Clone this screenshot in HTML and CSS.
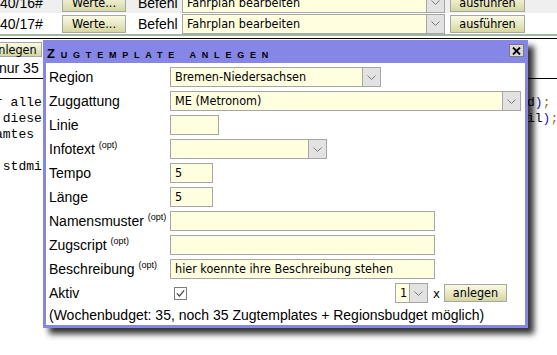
FILE: index.html
```html
<!DOCTYPE html>
<html lang="de">
<head>
    <meta charset="UTF-8">
    <meta name="viewport" content="width=device-width, initial-scale=1.0">
    <title>Zugtemplate anlegen</title>
    <link rel="stylesheet" href="styles.css">
</head>
<body>

    <div class="page">
        <div class="befehl grau">
            <span>40/16#</span>
            <button class="btn werte">Werte...</button>
            <span>Befehl</span>
            <div class="sel befehl-sel">
                <span class="val">Fahrplan bearbeiten</span>
                <span class="pfeil"><svg width="9" height="5" viewBox="0 0 9 5"><path d="M0.5 0.5 L4.5 4.5 L8.5 0.5" fill="none" stroke="#7a7a7a"/></svg></span>
            </div>
            <button class="btn ausf">ausführen</button>
        </div>
        <div class="befehl">
            <span>40/17#</span>
            <button class="btn werte">Werte...</button>
            <span>Befehl</span>
            <div class="sel befehl-sel">
                <span class="val">Fahrplan bearbeiten</span>
                <span class="pfeil"><svg width="9" height="5" viewBox="0 0 9 5"><path d="M0.5 0.5 L4.5 4.5 L8.5 0.5" fill="none" stroke="#7a7a7a"/></svg></span>
            </div>
            <button class="btn ausf">ausführen</button>
        </div>
        <div class="trenner"></div>

        <div class="neu">
            <button class="btn neu-btn">anlegen</button>
        </div>
        <div class="quota">nur 35</div>

        <div class="code">
<pre>r alle
 diese
amtes

 stdmi</pre>
<pre>d<span class="k">)</span><span class="s">;</span>
il<span class="k">)</span><span class="s">;</span></pre>
        </div>
    </div>

    <!-- Dialog liegt über der Seite -->
    <div class="dialog">
        <div class="dlg-titel">
            <span class="titel-text">Zugtemplate anlegen</span>
            <span class="schliessen">
                <svg width="9" height="8" viewBox="0 0 9 8"><path d="M1 0.5 L8 7.5 M8 0.5 L1 7.5" stroke="#000" stroke-width="1.8"/></svg>
            </span>
        </div>
        <div class="formular">
            <label>Region</label>
            <div class="sel w-region">
                <span class="val">Bremen-Niedersachsen</span>
                <span class="pfeil"><svg width="9" height="5" viewBox="0 0 9 5"><path d="M0.5 0.5 L4.5 4.5 L8.5 0.5" fill="none" stroke="#7a7a7a"/></svg></span>
            </div>

            <label>Zuggattung</label>
            <div class="sel w-gattung">
                <span class="val">ME (Metronom)</span>
                <span class="pfeil"><svg width="9" height="5" viewBox="0 0 9 5"><path d="M0.5 0.5 L4.5 4.5 L8.5 0.5" fill="none" stroke="#7a7a7a"/></svg></span>
            </div>

            <label>Linie</label>
            <div class="feld w-linie"></div>

            <label>Infotext <sup>(opt)</sup></label>
            <div class="sel w-info">
                <span class="val"></span>
                <span class="pfeil"><svg width="9" height="5" viewBox="0 0 9 5"><path d="M0.5 0.5 L4.5 4.5 L8.5 0.5" fill="none" stroke="#7a7a7a"/></svg></span>
            </div>

            <label>Tempo</label>
            <div class="feld w-zahl">5</div>

            <label>Länge</label>
            <div class="feld w-zahl">5</div>

            <label>Namensmuster <sup>(opt)</sup></label>
            <div class="feld w-lang"></div>

            <label>Zugscript <sup>(opt)</sup></label>
            <div class="feld w-lang"></div>

            <label>Beschreibung <sup>(opt)</sup></label>
            <div class="feld w-lang">hier koennte ihre Beschreibung stehen</div>

            <label>Aktiv</label>
            <div class="aktiv-zeile">
                <span class="haken">
                    <svg width="13" height="13" viewBox="0 0 13 13"><rect x="0.5" y="0.5" width="12" height="12" fill="#fff" stroke="#7c7c7c"/><path d="M2.8 6.3 L5.4 9 L10.2 3.4" fill="none" stroke="#444" stroke-width="1.2"/></svg>
                </span>
                <div class="sel w-anzahl">
                    <span class="val">1</span>
                    <span class="pfeil"><svg width="9" height="5" viewBox="0 0 9 5"><path d="M0.5 0.5 L4.5 4.5 L8.5 0.5" fill="none" stroke="#7a7a7a"/></svg></span>
                </div>
                <span class="mal">x</span>
                <button class="btn anlegen">anlegen</button>
            </div>
        </div>
        <div class="budget">(Wochenbudget: 35, noch 35 Zugtemplates + Regionsbudget möglich)</div>
    </div>

</body>
</html>
```

FILE: styles.css
```css
body {
    margin: 0;
    background-color: #fff;
    font-family: "Liberation Sans", Arial, sans-serif;
    font-size: 14px;
    color: #000;
    overflow: hidden;
}
.page {
    margin-top: -8px;
}

/* Befehlszeilen oben */
.befehl {
    display: grid;
    grid-template-columns: 62px 76px 44px 268px 75px;
    align-items: center;
    height: 21px;
    white-space: nowrap;
}
.befehl.grau {
    background-color: #efefef;
}
.trenner {
    height: 2px;
    background-color: #9fb89f;
    margin-bottom: 2px;
}
.neu {
    border-top: 1px solid #000;
    height: 20px;
    display: flex;
    align-items: center;
}
.quota {
    height: 19px;
    line-height: 19px;
    border-bottom: 1px solid #000;
    margin-left: -1px;
    white-space: nowrap;
}
.code {
    display: grid;
    grid-template-columns: 532px auto;
    margin: 16px 0 0 -5px;
    font: 13px/16px "Liberation Mono", "Courier New", monospace;
}
.code pre {
    margin: 0;
    font: inherit;
}
.code .k { color: #1a1aa6; }
.code .s { color: #a86a00; }

/* Formularelemente */
.btn {
    font-family: "DejaVu Sans Condensed", "DejaVu Sans", sans-serif;
    font-size: 12.5px;
    height: 18px;
    padding: 0;
    border: 1px solid #a6a6a6;
    background: linear-gradient(#fafae4, #d6d6a2);
    color: #000;
    line-height: 16px;
    box-sizing: border-box;
}
.werte { width: 64px; }
.ausf { width: 75px; }
.neu-btn {
    width: 56px;
    height: 15px;
    margin-left: -14px;
    line-height: 13px;
}
.sel,
.feld {
    display: flex;
    height: 20px;
    box-sizing: border-box;
    border: 1px solid #a6a6a6;
    background-color: #ffffe0;
    font-family: "DejaVu Sans Condensed", "DejaVu Sans", sans-serif;
    font-size: 12.5px;
    line-height: 18px;
    white-space: nowrap;
}
.sel .val {
    flex: 1;
    padding-left: 4px;
    overflow: hidden;
}
.feld {
    padding-left: 4px;
}
.sel .pfeil {
    width: 17px;
    background-color: #e2e2e2;
    border-left: 1px solid #a6a6a6;
    display: flex;
    align-items: center;
    justify-content: center;
}
.befehl-sel { width: 263px; }

/* Dialog */
.dialog {
    position: absolute;
    left: 43px;
    top: 40px;
    width: 479px;
    height: 282px;
    border: 3px solid #8686e6;
    background-color: #fff;
    box-shadow: 6px 6px 6px rgba(0, 0, 0, 0.8);
}
.dlg-titel {
    height: 20px;
    background-color: #8686e6;
    display: flex;
    justify-content: space-between;
    align-items: flex-start;
}
.titel-text {
    font-weight: bold;
    font-size: 13px;
    font-variant: small-caps;
    letter-spacing: 5.8px;
    line-height: 21px;
    margin-left: 1px;
}
.schliessen {
    width: 15px;
    height: 13px;
    margin: 1px 1px 0 0;
    box-sizing: border-box;
    border: 1px solid #7a7a7a;
    background-color: #d8d8d8;
    display: flex;
    align-items: center;
    justify-content: center;
}
.formular {
    display: grid;
    grid-template-columns: 121px 1fr;
    grid-auto-rows: 24px;
    align-items: center;
    padding: 2px 0 0 3px;
}
.formular label {
    white-space: nowrap;
}
sup {
    font-size: 9px;
    line-height: 0;
}
.w-region { width: 211px; }
.w-gattung { width: 351px; }
.w-linie { width: 49px; }
.w-info { width: 157px; }
.w-zahl { width: 43px; }
.w-lang { width: 265px; }
.w-anzahl { width: 33px; }
.aktiv-zeile {
    display: flex;
    align-items: center;
    padding-right: 18px;
}
.haken {
    display: flex;
    margin: 1px auto 0 4px;
}
.mal {
    font-family: "DejaVu Sans Condensed", "DejaVu Sans", sans-serif;
    font-size: 13px;
    margin: 0 4px 0 5px;
}
.anlegen {
    width: 63px;
}
.budget {
    padding-left: 3px;
    line-height: 20px;
    white-space: nowrap;
}
```
